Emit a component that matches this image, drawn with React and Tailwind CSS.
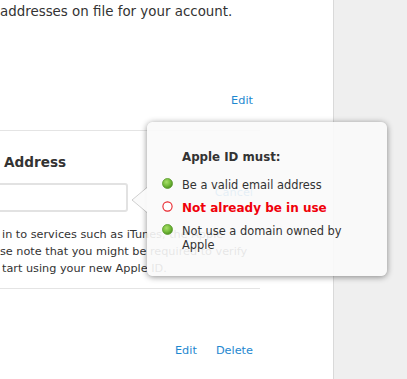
import React from "react";

function GreenDot() {
  return (
    <svg width="11" height="11" viewBox="0 0 11 11" className="shrink-0">
      <defs>
        <radialGradient id="gd" cx="40%" cy="35%" r="65%">
          <stop offset="0%" stopColor="#a9e06a" />
          <stop offset="60%" stopColor="#74bb3a" />
          <stop offset="100%" stopColor="#4f9221" />
        </radialGradient>
      </defs>
      <circle cx="5.5" cy="5.5" r="5" fill="url(#gd)" stroke="#5c9a2f" strokeWidth="0.8" />
    </svg>
  );
}

function RedRing() {
  return (
    <svg width="11" height="11" viewBox="0 0 11 11" className="shrink-0">
      <circle cx="5.5" cy="5.5" r="4.6" fill="#fff" stroke="#e8232a" strokeWidth="1.1" />
    </svg>
  );
}

export default function App() {
  const font = "font-['DejaVu_Sans',Verdana,sans-serif]";
  return (
    <div className={`relative flex w-[407px] h-[379px] overflow-hidden ${font}`}>
      <div className="w-[333px] shrink-0 bg-white overflow-hidden">
        <div className="w-[260px]">
          <p className="pt-[3px] text-[13.4px] leading-[18px] text-[#333] whitespace-nowrap">
            addresses on file for your account.
          </p>
          <div className="mt-[72px] flex justify-end pr-[7px] text-[11.3px] leading-[16px] text-[#1e88d0]">
            <span>Edit</span>
          </div>
          <div className="mt-[21px] h-px bg-[#e4e4e4]" />
          <h2 className="mt-[21px] pl-[4px] text-[13.6px] leading-[20px] font-bold text-[#333] whitespace-nowrap">
            Address
          </h2>
          <div className="mt-[11px] flex items-start">
            <div className="-ml-[10px] w-[138px] h-[29px] shrink-0 rounded-[3px] border-2 border-[#e2e2e2] bg-white" />
            <span className="ml-auto mt-[2px] pr-[7px] text-[11.3px] leading-[16px] text-[#1e88d0]">Cancel</span>
          </div>
          <div className="mt-[14px] text-[11.25px] leading-[17px] text-[#333] whitespace-nowrap">
            <p className="pl-[2px]">in to services such as iTunes, the Apple</p>
            <p>se note that you might be required to verify</p>
            <p className="pl-[2px]">tart using your new Apple ID.</p>
          </div>
          <div className="mt-[11px] h-px bg-[#e4e4e4]" />
          <div className="mt-[54px] flex justify-end gap-[19px] pr-[7px] text-[11.3px] leading-[16px] text-[#1e88d0]">
            <span>Edit</span>
            <span>Delete</span>
          </div>
        </div>
      </div>
      <div className="flex-1 bg-[#efefef] border-l border-[#d9d9d9]" />

      <div className="absolute left-[147px] top-[122px] w-[240px] h-[154px] rounded-[6px] bg-[rgba(250,250,250,0.9)] shadow-[0_1px_6px_rgba(0,0,0,0.45)]">
        <svg width="17" height="26" viewBox="0 0 17 26" className="absolute left-[-16px] top-[65px]">
          <polygon points="17,0 1,13 17,26" fill="rgba(250,250,250,0.95)" />
          <polyline points="16,0.5 1,13 16,25.5" fill="none" stroke="rgba(0,0,0,0.18)" strokeWidth="1" />
        </svg>
        <div className="pt-[27px] pl-[35px] text-[11.8px] leading-[16px] font-bold text-[#333]">
          Apple ID must:
        </div>
        <ul className="mt-[13px] pl-[15px] flex flex-col gap-[9px] text-[11.4px] leading-[14px] text-[#333]">
          <li className="flex items-start gap-[9px]">
            <GreenDot />
            <span className="w-[170px]">Be a valid email address</span>
          </li>
          <li className="flex items-start gap-[9px]">
            <RedRing />
            <span className="w-[170px] font-bold text-[12px] text-[#f0000a]">Not already be in use</span>
          </li>
          <li className="flex items-start gap-[9px]">
            <GreenDot />
            <span className="w-[170px]">Not use a domain owned by Apple</span>
          </li>
        </ul>
      </div>
    </div>
  );
}
